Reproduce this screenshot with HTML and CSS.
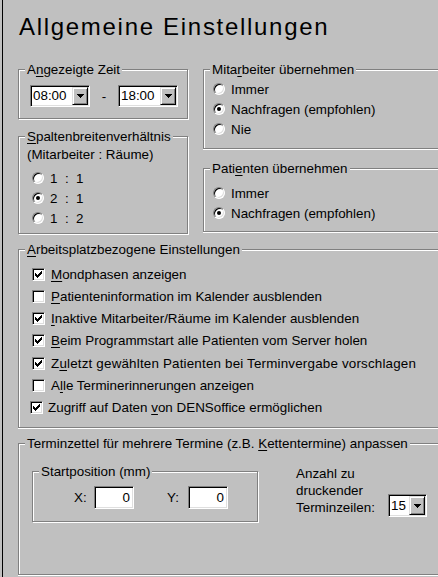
FILE: index.html
```html
<!DOCTYPE html>
<html lang="de">
<head>
<meta charset="utf-8">
<title>Allgemeine Einstellungen</title>
<link rel="stylesheet" href="styles.css">
</head>
<body>
<div class="frame">
  <h1 class="title">Allgemeine Einstellungen</h1>

  <div class="top">
    <div class="col">
      <fieldset class="grp grp-time">
        <legend>A<u>n</u>gezeigte Zeit</legend>
        <div class="body time-row">
          <div class="combo w60"><span class="val">08:00</span><span class="btn"><svg width="7" height="4" viewBox="0 0 7 4"><path d="M0 0h7v1H0zM1 1h5v1H1zM2 2h3v1H2zM3 3h1v1H3z"/></svg></span></div>
          <span class="dash">-</span>
          <div class="combo w60"><span class="val">18:00</span><span class="btn"><svg width="7" height="4" viewBox="0 0 7 4"><path d="M0 0h7v1H0zM1 1h5v1H1zM2 2h3v1H2zM3 3h1v1H3z"/></svg></span></div>
        </div>
      </fieldset>

      <fieldset class="grp grp-ratio">
        <legend><u>S</u>paltenbreitenverhältnis</legend>
        <div class="body">
          <div class="sub">(Mitarbeiter : Räume)</div>
          <div class="opts">
            <div class="opt"><span class="radio"></span><span>1&nbsp;&nbsp;:&nbsp;&nbsp;1</span></div>
            <div class="opt"><span class="radio on"></span><span>2&nbsp;&nbsp;:&nbsp;&nbsp;1</span></div>
            <div class="opt"><span class="radio"></span><span>1&nbsp;&nbsp;:&nbsp;&nbsp;2</span></div>
          </div>
        </div>
      </fieldset>
    </div>

    <div class="col">
      <fieldset class="grp open grp-emp">
        <legend>Mita<u>r</u>beiter übernehmen</legend>
        <div class="body">
          <div class="opt"><span class="radio"></span><span>Immer</span></div>
          <div class="opt"><span class="radio on"></span><span>Nachfragen (empfohlen)</span></div>
          <div class="opt"><span class="radio"></span><span>Nie</span></div>
        </div>
      </fieldset>

      <fieldset class="grp open grp-pat">
        <legend>Pati<u>e</u>nten übernehmen</legend>
        <div class="body">
          <div class="opt"><span class="radio"></span><span>Immer</span></div>
          <div class="opt"><span class="radio on"></span><span>Nachfragen (empfohlen)</span></div>
        </div>
      </fieldset>
    </div>
  </div>

  <fieldset class="grp open grp-ws">
    <legend><u>A</u>rbeitsplatzbezogene Einstellungen</legend>
    <div class="body">
      <div class="chkrow"><span class="chk"><svg width="11" height="11" viewBox="0 0 11 11"><path d="M2 4h1v3H2zM3 5h1v3H3zM4 6h1v3H4zM5 5h1v3H5zM6 4h1v3H6zM7 3h1v3H7zM8 2h1v3H8z"/></svg></span><span><u>M</u>ondphasen anzeigen</span></div>
      <div class="chkrow"><span class="chk"></span><span><u>P</u>atienteninformation im Kalender ausblenden</span></div>
      <div class="chkrow"><span class="chk"><svg width="11" height="11" viewBox="0 0 11 11"><path d="M2 4h1v3H2zM3 5h1v3H3zM4 6h1v3H4zM5 5h1v3H5zM6 4h1v3H6zM7 3h1v3H7zM8 2h1v3H8z"/></svg></span><span><u>I</u>naktive Mitarbeiter/Räume im Kalender ausblenden</span></div>
      <div class="chkrow"><span class="chk"><svg width="11" height="11" viewBox="0 0 11 11"><path d="M2 4h1v3H2zM3 5h1v3H3zM4 6h1v3H4zM5 5h1v3H5zM6 4h1v3H6zM7 3h1v3H7zM8 2h1v3H8z"/></svg></span><span><u>B</u>eim Programmstart alle Patienten vom Server holen</span></div>
      <div class="chkrow bump wide"><span class="chk"><svg width="11" height="11" viewBox="0 0 11 11"><path d="M2 4h1v3H2zM3 5h1v3H3zM4 6h1v3H4zM5 5h1v3H5zM6 4h1v3H6zM7 3h1v3H7zM8 2h1v3H8z"/></svg></span><span>Z<u>u</u>letzt gewählten Patienten bei Terminvergabe vorschlagen</span></div>
      <div class="chkrow"><span class="chk"></span><span>A<u>l</u>le Terminerinnerungen anzeigen</span></div>
      <div class="chkrow shift"><span class="chk"><svg width="11" height="11" viewBox="0 0 11 11"><path d="M2 4h1v3H2zM3 5h1v3H3zM4 6h1v3H4zM5 5h1v3H5zM6 4h1v3H6zM7 3h1v3H7zM8 2h1v3H8z"/></svg></span><span>Zugriff auf Daten <u>v</u>on DENSoffice ermöglichen</span></div>
    </div>
  </fieldset>

  <fieldset class="grp open grp-print">
    <legend>Terminzettel für mehrere Termine (z.B. <u>K</u>ettentermine) anpassen</legend>
    <div class="body print-row">
      <fieldset class="grp grp-start">
        <legend>Startposition (mm)</legend>
        <div class="body pos-row">
          <span class="lbl lbl-x">X:</span>
          <span class="field">0</span>
          <span class="lbl lbl-y">Y:</span>
          <span class="field">0</span>
        </div>
      </fieldset>
      <div class="count">
        <div class="count-label">Anzahl zu<br>druckender<br>Terminzeilen:</div>
        <div class="combo w39"><span class="val">15</span><span class="btn"><svg width="7" height="4" viewBox="0 0 7 4"><path d="M0 0h7v1H0zM1 1h5v1H1zM2 2h3v1H2zM3 3h1v1H3z"/></svg></span></div>
      </div>
    </div>
  </fieldset>
</div>
</body>
</html>
```

FILE: styles.css
```css
html, body {
  margin: 0;
  padding: 0;
}

body {
  width: 438px;
  height: 577px;
  overflow: hidden;
  background: #c0c0c0;
  font-family: "Liberation Sans", Arial, sans-serif;
  font-size: 13.4px;
  color: #000;
}

.frame {
  margin-left: 2px;
  border-left: 1px solid #000;
  width: 436px;
  height: 577px;
  box-sizing: border-box;
  padding-left: 15px;
}

.title {
  margin: 0;
  padding: 13px 0 0 1px;
  font-size: 24px;
  font-weight: normal;
  letter-spacing: 1.7px;
  line-height: 28px;
}

u {
  text-decoration: underline;
  text-underline-offset: 2px;
}

/* group boxes */
.grp {
  margin: 0;
  padding: 0;
  min-width: 0;
  border: 1px solid #808080;
  box-shadow: inset 1px 1px #fff, 1px 1px #fff;
}

/* groups whose right edge lies beyond the window */
.grp.open {
  border-right-width: 0;
  box-shadow: inset 1px 1px #fff, 0 1px #fff;
}

.grp > legend {
  margin-left: 6px;
  padding: 0 2px;
  line-height: 15px;
  background: #c0c0c0;
  white-space: nowrap;
}

.top {
  display: grid;
  grid-template-columns: 170px 1fr;
  column-gap: 15px;
  margin-top: 21px;
  align-items: start;
}

.col {
  display: flex;
  flex-direction: column;
  min-width: 0;
}

.grp-time .body {
  padding: 8px 0 11px 11px;
}

.time-row {
  display: flex;
  align-items: center;
}

.dash {
  width: 28px;
  text-align: center;
}

.grp-ratio {
  margin-top: 10px;
}

.grp-ratio .body {
  padding: 3px 0 5px 8px;
}

.sub {
  line-height: 15px;
  margin-bottom: 6px;
}

.opts {
  padding-left: 5px;
}

.opt {
  display: flex;
  align-items: center;
  gap: 6px;
  height: 20px;
  white-space: nowrap;
}

.grp-emp .body {
  padding: 2px 0 9px 9px;
}

.grp-pat {
  margin-top: 12px;
}

.grp-pat .body {
  padding: 7px 0 8px 9px;
}

.grp-ws {
  margin-top: 8px;
}

.grp-ws .body {
  padding: 6px 0 9px 13px;
}

.chkrow {
  display: flex;
  align-items: center;
  gap: 6px;
  height: 22px;
  white-space: nowrap;
}

.chkrow.bump {
  margin-top: 1px;
}

.chkrow.wide {
  letter-spacing: 0.18px;
}

.chkrow.shift {
  margin-left: -2px;
  gap: 5px;
}

.grp-print {
  margin-top: 8px;
}

.print-row {
  display: flex;
  align-items: flex-start;
  padding: 13px 0 52px 13px;
}

.grp-start {
  width: 226px;
  box-sizing: border-box;
  flex: none;
}

.pos-row {
  display: flex;
  align-items: center;
  padding: 7px 0 12px 41px;
}

.lbl-x {
  width: 20px;
}

.lbl-y {
  width: 21px;
  margin-left: 33px;
}

.count {
  display: flex;
  align-items: flex-end;
  margin: 1px 0 0 38px;
}

.count-label {
  width: 92px;
  line-height: 17px;
  white-space: nowrap;
}

.count .combo {
  margin-bottom: -1px;
}

/* sunken controls */
.combo,
.field,
.radio,
.chk {
  background: #fff;
  border: 1px solid;
  border-color: #808080 #fff #fff #808080;
  box-shadow: inset 1px 1px #000, inset -1px -1px #dfdfdf;
  box-sizing: border-box;
  flex: none;
}

.combo {
  display: flex;
  height: 22px;
  padding: 1px;
}

.combo.w60 {
  width: 60px;
}

.combo.w39 {
  width: 39px;
  height: 23px;
}

.combo .val {
  flex: 1;
  padding-left: 1px;
  line-height: 18px;
}

.combo.w39 .val {
  line-height: 19px;
}

.btn {
  width: 16px;
  box-sizing: border-box;
  background: #c0c0c0;
  border: 1px solid;
  border-color: #dfdfdf #000 #000 #dfdfdf;
  box-shadow: inset 1px 1px #fff, inset -1px -1px #808080;
  display: flex;
  align-items: center;
  justify-content: center;
}

.btn svg {
  display: block;
  fill: #000;
}

.field {
  width: 40px;
  height: 23px;
  text-align: right;
  padding-right: 3px;
  line-height: 21px;
}

.radio {
  width: 12px;
  height: 12px;
  border-radius: 50%;
  position: relative;
}

.radio.on::after {
  content: "";
  position: absolute;
  left: 3px;
  top: 3px;
  width: 4px;
  height: 4px;
  border-radius: 50%;
  background: #000;
}

.chk {
  width: 13px;
  height: 13px;
  display: flex;
}

.chk svg {
  display: block;
  fill: #000;
  shape-rendering: crispEdges;
}
```
